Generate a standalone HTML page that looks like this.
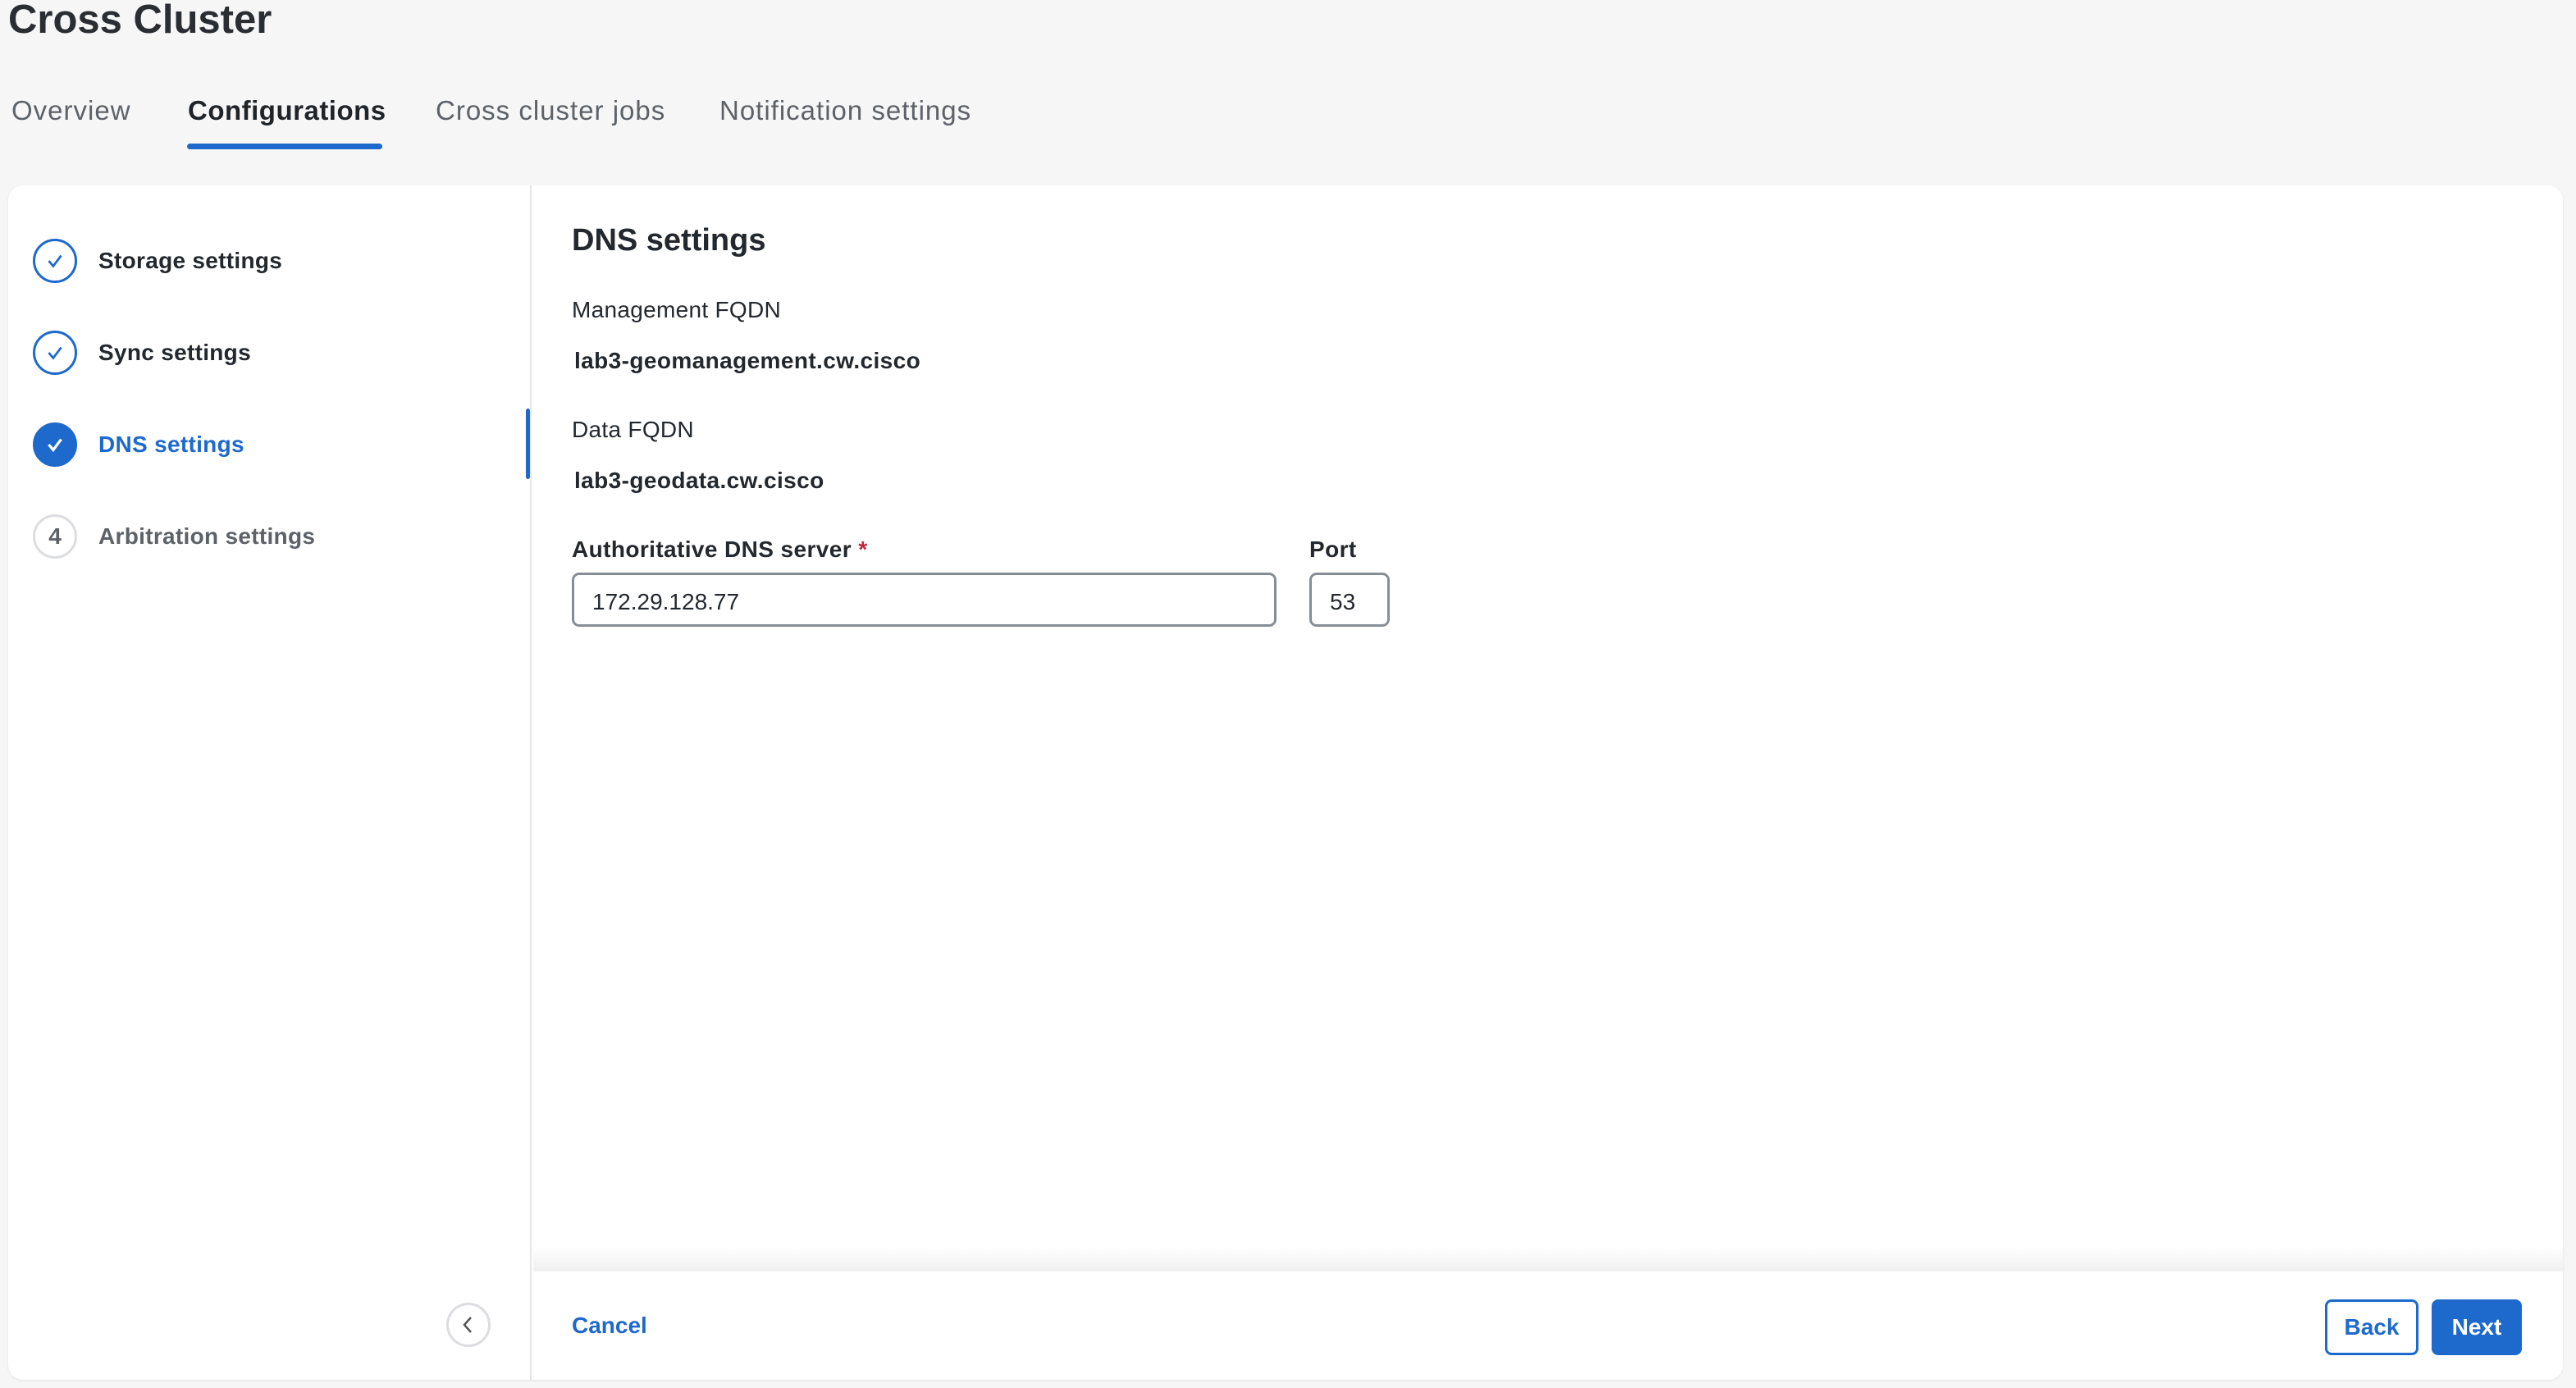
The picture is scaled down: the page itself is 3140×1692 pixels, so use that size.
<!DOCTYPE html>
<html><head><style>
*{box-sizing:border-box;margin:0;padding:0}
body{width:3140px;height:1692px;background:#f6f6f6;font-family:"Liberation Sans",sans-serif;position:relative;overflow:hidden;color:#23282e}
.a{position:absolute;white-space:nowrap}
.title{left:10px;top:-4px;font-size:49px;font-weight:600;color:#2a2e33}
.tab{top:116px;font-size:33px;letter-spacing:1px;color:#5d6269}
.card{left:10px;top:226px;width:3114px;height:1456px;background:#fff;border-radius:18px;box-shadow:0 1px 3px rgba(0,0,0,.08)}
.lp{left:10px;top:226px;width:638px;height:1456px;border-right:2px solid #e6e6e6}
.circ{width:54px;height:54px;border-radius:50%;border:3px solid #1d69cc;display:flex;align-items:center;justify-content:center}
.step{font-size:28px;font-weight:bold;color:#23282e;letter-spacing:.3px}
.lbl{font-size:28px;color:#23282e;letter-spacing:.3px}
.val{font-size:28px;font-weight:bold;letter-spacing:.4px}
.inp{border:3px solid #878d96;border-radius:9px;height:66px;font-size:28px;padding:17px 22px;color:#23282e}
.btn{height:68px;border-radius:8px;font-size:28px;font-weight:bold;display:flex;align-items:center;justify-content:center}
</style></head><body>
<div class="a title">Cross Cluster</div>
<div class="a tab" style="left:14px">Overview</div>
<div class="a tab" style="left:229px;color:#1f2429;font-weight:bold;letter-spacing:.5px">Configurations</div>
<div class="a" style="left:228px;top:175px;width:238px;height:7px;border-radius:4px;background:#1d69cc"></div>
<div class="a tab" style="left:531px">Cross cluster jobs</div>
<div class="a tab" style="left:877px">Notification settings</div>
<div class="a card"></div>
<div class="a lp"></div>
<div class="a" style="left:641px;top:498px;width:5px;height:86px;background:#1d69cc;border-radius:3px"></div>

<div class="a circ" style="left:40px;top:291px"><svg width="28" height="28" viewBox="0 0 26 26"><path d="M6 13l5 6 9-12" fill="none" stroke="#1d69cc" stroke-width="2.5"/></svg></div>
<div class="a step" style="left:120px;top:302px">Storage settings</div>
<div class="a circ" style="left:40px;top:403px"><svg width="28" height="28" viewBox="0 0 26 26"><path d="M6 13l5 6 9-12" fill="none" stroke="#1d69cc" stroke-width="2.5"/></svg></div>
<div class="a step" style="left:120px;top:414px">Sync settings</div>
<div class="a circ" style="left:40px;top:515px;background:#1d69cc"><svg width="28" height="28" viewBox="0 0 26 26"><path d="M6 13l5 6 9-12" fill="none" stroke="#fff" stroke-width="3"/></svg></div>
<div class="a step" style="left:120px;top:526px;color:#1d69cc">DNS settings</div>
<div class="a circ" style="left:40px;top:627px;border-color:#dcdde0;font-size:28px;font-weight:bold;color:#5d6269">4</div>
<div class="a step" style="left:120px;top:638px;color:#5d6269">Arbitration settings</div>

<div class="a" style="left:544px;top:1588px;width:54px;height:54px;border-radius:50%;border:3px solid #dcdde0;display:flex;align-items:center;justify-content:center"><svg width="20" height="24" viewBox="0 0 20 24"><path d="M13 3L5 12l8 9" fill="none" stroke="#555" stroke-width="2.5"/></svg></div>

<div class="a" style="left:697px;top:272px;font-size:38px;font-weight:bold">DNS settings</div>
<div class="a lbl" style="left:697px;top:362px">Management FQDN</div>
<div class="a val" style="left:700px;top:424px">lab3-geomanagement.cw.cisco</div>
<div class="a lbl" style="left:697px;top:508px">Data FQDN</div>
<div class="a val" style="left:700px;top:570px">lab3-geodata.cw.cisco</div>
<div class="a val" style="left:697px;top:654px">Authoritative DNS server <span style="color:#c4263c">*</span></div>
<div class="a val" style="left:1596px;top:654px">Port</div>
<div class="a inp" style="left:697px;top:698px;width:859px">172.29.128.77</div>
<div class="a inp" style="left:1596px;top:698px;width:98px">53</div>

<div class="a" style="left:650px;top:1520px;width:2474px;height:30px;background:linear-gradient(#fff,#efefef)"></div>
<div class="a" style="left:650px;top:1550px;width:2474px;height:132px;background:#fff;border-radius:0 0 18px 0"></div>
<div class="a" style="left:697px;top:1600px;font-size:28px;font-weight:bold;color:#1d69cc">Cancel</div>
<div class="a btn" style="left:2834px;top:1584px;width:114px;border:3px solid #1d69cc;color:#1d69cc;background:#fff">Back</div>
<div class="a btn" style="left:2964px;top:1584px;width:110px;background:#1d69cc;color:#fff">Next</div>
</body></html>
